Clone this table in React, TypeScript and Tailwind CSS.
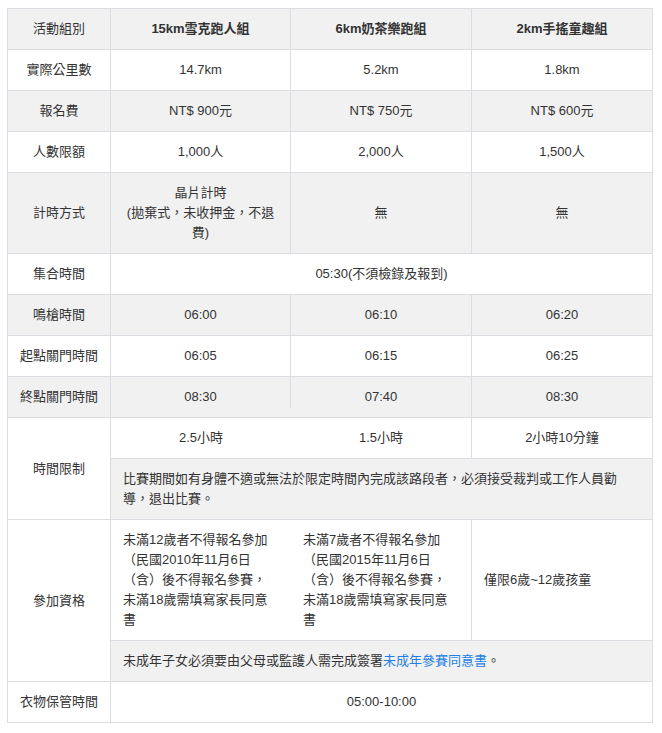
import React from "react";

const B = "border-r border-b border-[#dcdde2]";
const G = "bg-[#f1f1f1]";
const W = "bg-white";
const C = "flex items-center justify-center text-center py-[10px] px-3";
const L = "flex items-center justify-center text-center py-[10px] px-1 whitespace-nowrap";

function Cell({ bg, children, className = "" }: { bg: string; children?: React.ReactNode; className?: string }) {
  return <div className={`${B} ${bg} ${C} ${className}`}>{children}</div>;
}

function Label({ bg, children, className = "" }: { bg: string; children?: React.ReactNode; className?: string }) {
  return <div className={`${B} ${bg} ${L} ${className}`}>{children}</div>;
}

export default function App() {
  return (
    <div
      className="bg-white w-[662px] h-[733px] pt-[8px] pl-[7px] text-[13px] leading-[20px] text-[#333]"
      style={{ fontFamily: '"Liberation Sans", Arial, "Noto Sans CJK TC", sans-serif' }}
    >
      <div className="grid grid-cols-[103px_180px_181px_181px] w-[646px] border-l border-t border-[#dcdde2]">
        {/* Row 1 */}
        <Label bg={G}>活動組別</Label>
        <Cell bg={G} className="font-bold">15km雪克跑人組</Cell>
        <Cell bg={G} className="font-bold">6km奶茶樂跑組</Cell>
        <Cell bg={G} className="font-bold">2km手搖童趣組</Cell>
        {/* Row 2 */}
        <Label bg={W}>實際公里數</Label>
        <Cell bg={W}>14.7km</Cell>
        <Cell bg={W}>5.2km</Cell>
        <Cell bg={W}>1.8km</Cell>
        {/* Row 3 */}
        <Label bg={G}>報名費</Label>
        <Cell bg={G}>NT$ 900元</Cell>
        <Cell bg={G}>NT$ 750元</Cell>
        <Cell bg={G}>NT$ 600元</Cell>
        {/* Row 4 */}
        <Label bg={W}>人數限額</Label>
        <Cell bg={W}>1,000人</Cell>
        <Cell bg={W}>2,000人</Cell>
        <Cell bg={W}>1,500人</Cell>
        {/* Row 5 */}
        <Label bg={G}>計時方式</Label>
        <Cell bg={G}>
          <span>
            晶片計時
            <br />
            (拋棄式，未收押金，不退
            <br />
            費)
          </span>
        </Cell>
        <Cell bg={G}>無</Cell>
        <Cell bg={G}>無</Cell>
        {/* Row 6 */}
        <Label bg={W}>集合時間</Label>
        <Cell bg={W} className="col-span-3">05:30(不須檢錄及報到)</Cell>
        {/* Row 7 */}
        <Label bg={G}>鳴槍時間</Label>
        <Cell bg={G}>06:00</Cell>
        <Cell bg={G}>06:10</Cell>
        <Cell bg={G}>06:20</Cell>
        {/* Row 8 */}
        <Label bg={W}>起點關門時間</Label>
        <Cell bg={W}>06:05</Cell>
        <Cell bg={W}>06:15</Cell>
        <Cell bg={W}>06:25</Cell>
        {/* Row 9 */}
        <Label bg={G}>終點關門時間</Label>
        <div className={`border-b border-[#dcdde2] ${G} flex`}>
          <div className="flex-1 flex items-center justify-center py-[10px] px-3">08:30</div>
          <div className="w-px h-[31px] bg-[#dcdde2] self-start" />
        </div>
        <Cell bg={G}>07:40</Cell>
        <Cell bg={G}>08:30</Cell>
        {/* Row 10 */}
        <Label bg={W} className="row-span-2">時間限制</Label>
        <div className={`border-b border-[#dcdde2] ${W} ${C}`}>2.5小時</div>
        <Cell bg={W}>1.5小時</Cell>
        <Cell bg={W}>2小時10分鐘</Cell>
        <div className={`${B} ${G} col-span-3 py-[10px] px-3 text-left`}>
          比賽期間如有身體不適或無法於限定時間內完成該路段者，必須接受裁判或工作人員勸
          <br />
          導，退出比賽。
        </div>
        {/* Row 11 */}
        <Label bg={W} className="row-span-2">參加資格</Label>
        <div className={`border-b border-[#dcdde2] ${W} py-[10px] px-3 text-left`}>
          未滿12歲者不得報名參加
          <br />
          （民國2010年11月6日
          <br />
          （含）後不得報名參賽，
          <br />
          未滿18歲需填寫家長同意
          <br />
          書
        </div>
        <div className={`${B} ${W} py-[10px] px-3 text-left`}>
          未滿7歲者不得報名參加
          <br />
          （民國2015年11月6日
          <br />
          （含）後不得報名參賽，
          <br />
          未滿18歲需填寫家長同意
          <br />
          書
        </div>
        <div className={`${B} ${W} flex items-center py-[10px] px-3 text-left`}>僅限6歲~12歲孩童</div>
        <div className={`${B} ${G} col-span-3 py-[10px] px-3 text-left`}>
          未成年子女必須要由父母或監護人需完成簽署
          <a className="text-[#1f7fe6]">未成年參賽同意書</a>。
        </div>
        {/* Row 12 */}
        <Label bg={W}>衣物保管時間</Label>
        <Cell bg={W} className="col-span-3">05:00-10:00</Cell>
      </div>
    </div>
  );
}
